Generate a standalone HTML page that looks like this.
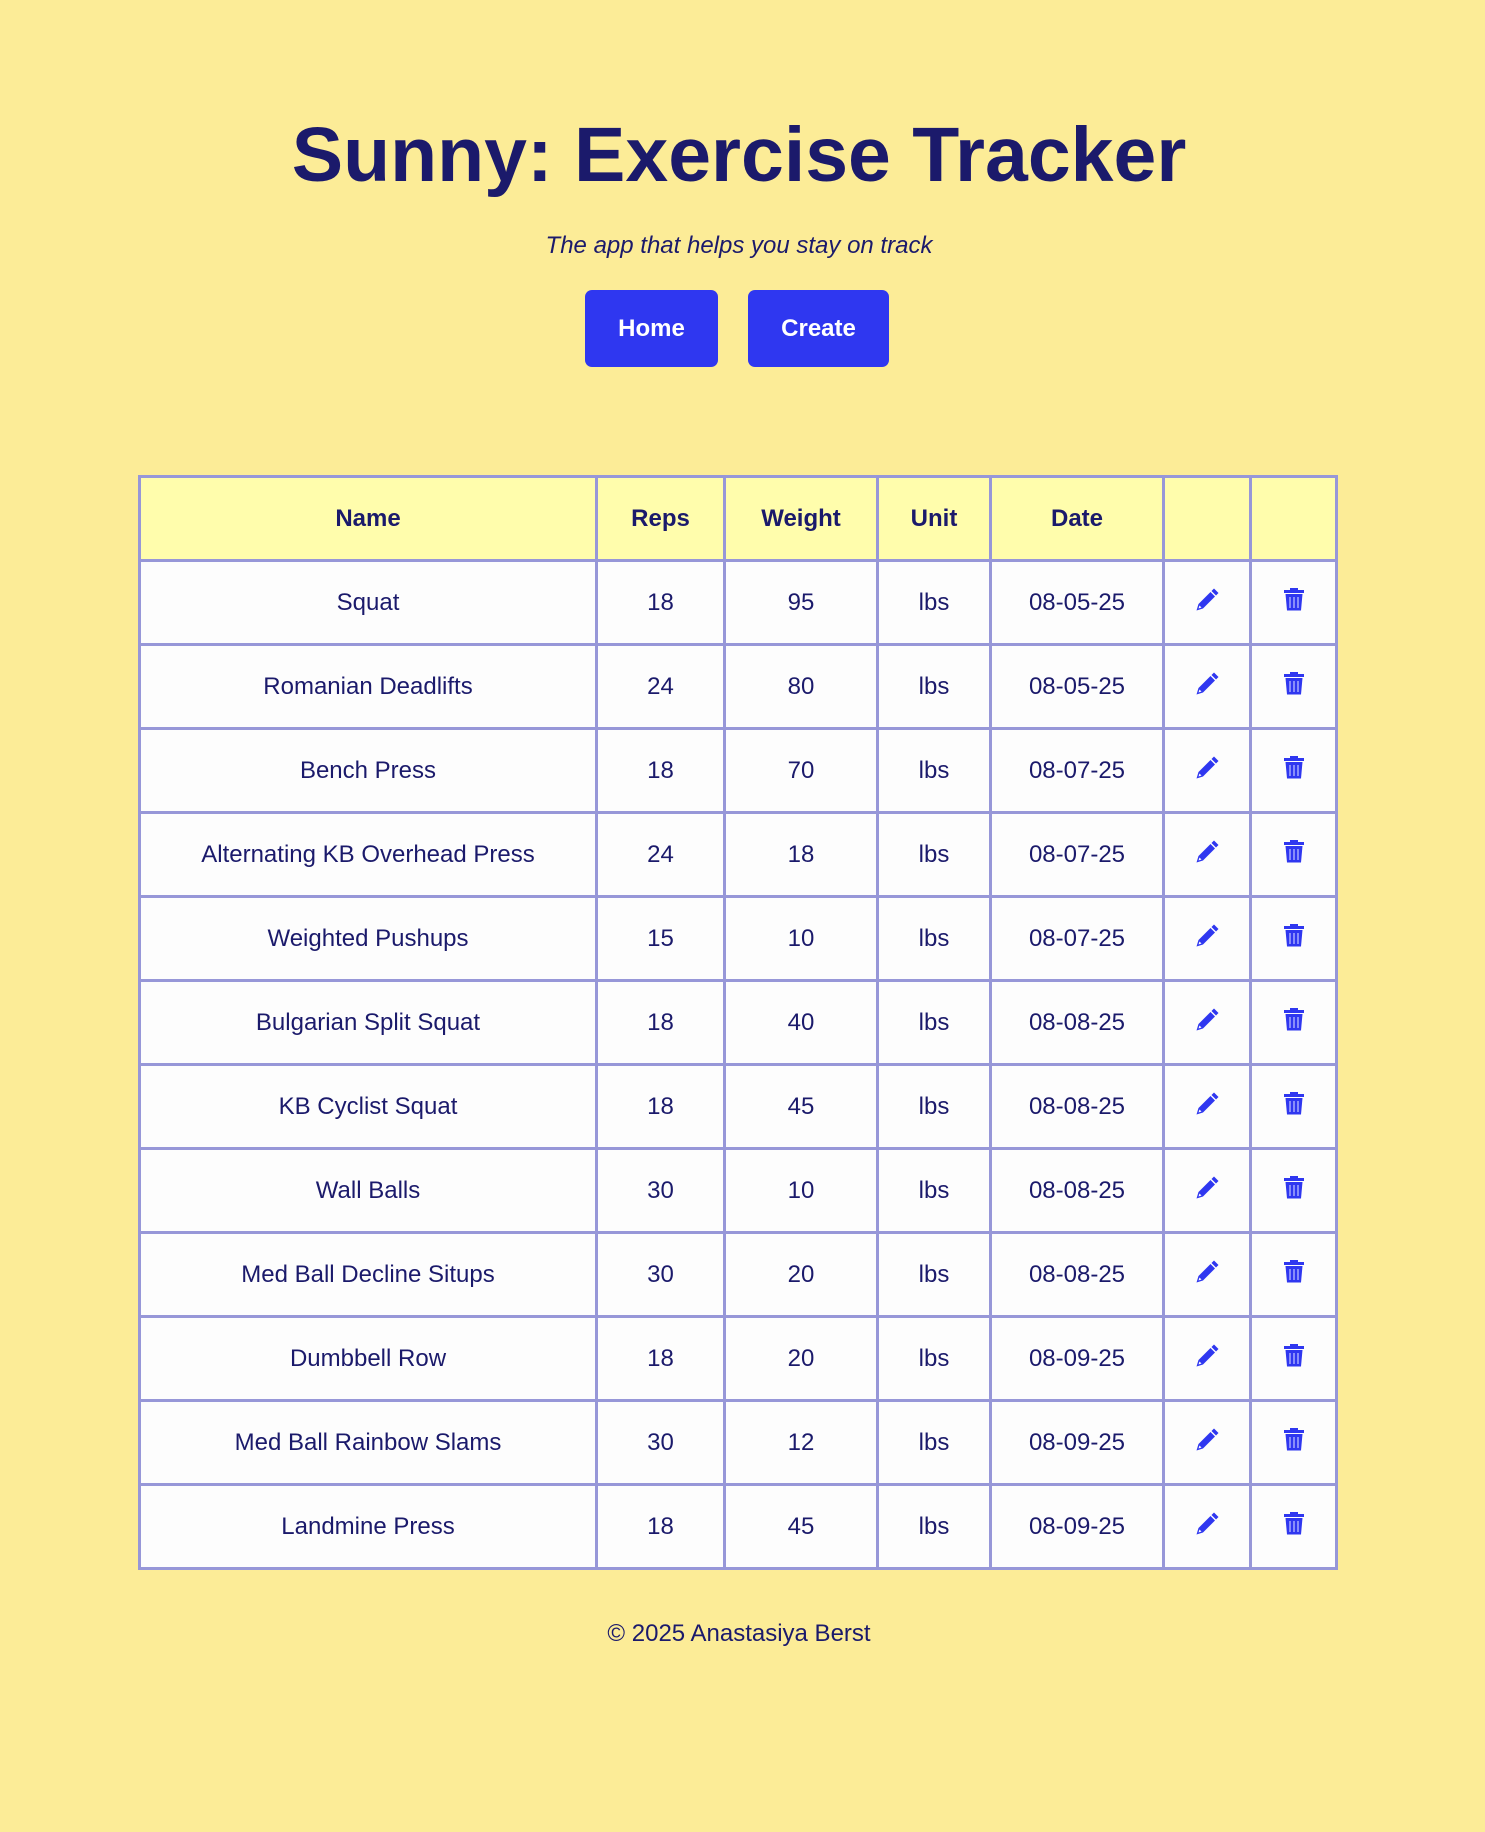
<!DOCTYPE html>
<html><head><meta charset="utf-8"><style>
html,body{margin:0;padding:0}
body{background:#fcec97;width:1485px;height:1832px;font-family:"Liberation Sans",sans-serif;color:#1b1a6b;position:relative}
h1{position:absolute;top:103px;left:0;width:1478px;text-align:center;margin:0;font-size:77px;font-weight:bold;line-height:104px}
.sub{position:absolute;top:232px;left:0;width:1478px;text-align:center;font-style:italic;font-size:24px;margin:0}
.btn{position:absolute;top:290px;height:77px;background:#2f37f0;color:#fff;border-radius:7px;font-weight:bold;font-size:24px;line-height:77px;text-align:center}
table{position:absolute;left:138px;top:475px;border-collapse:collapse}
td,th{border:3px solid #9797d8;text-align:center;font-size:24px;height:81px;padding:0}
th{background:#fffdac;font-weight:bold}
td{background:#fdfdfd}
svg{display:block;margin:-6px auto 0}
.foot{position:absolute;top:1620px;left:0;width:1478px;text-align:center;font-size:24px}
</style></head><body>
<h1>Sunny: Exercise Tracker</h1>
<p class="sub">The app that helps you stay on track</p>
<div class="btn" style="left:585px;width:133px">Home</div>
<div class="btn" style="left:748px;width:141px">Create</div>
<table>
<colgroup><col style="width:457px"><col style="width:128px"><col style="width:153px"><col style="width:113px"><col style="width:173px"><col style="width:87px"><col style="width:86px"></colgroup>
<tr><th>Name</th><th>Reps</th><th>Weight</th><th>Unit</th><th>Date</th><th></th><th></th></tr>
<tbody id="b"></tbody>
</table>
<div class="foot">© 2025 Anastasiya Berst</div>
<script>
var d=[["Squat",18,95,"08-05-25"],["Romanian Deadlifts",24,80,"08-05-25"],["Bench Press",18,70,"08-07-25"],["Alternating KB Overhead Press",24,18,"08-07-25"],["Weighted Pushups",15,10,"08-07-25"],["Bulgarian Split Squat",18,40,"08-08-25"],["KB Cyclist Squat",18,45,"08-08-25"],["Wall Balls",30,10,"08-08-25"],["Med Ball Decline Situps",30,20,"08-08-25"],["Dumbbell Row",18,20,"08-09-25"],["Med Ball Rainbow Slams",30,12,"08-09-25"],["Landmine Press",18,45,"08-09-25"]];
var pen='<svg width="25" height="25" viewBox="0 0 25 25"><path d="M19 1.5l4.5 4.5-2.5 2.5-4.5-4.5z" fill="#2f37f0"/><path d="M15.5 5l4.5 4.5L8 21.5 1.5 23.5 3.5 17z" fill="#2f37f0"/><path d="M4.5 18.5l-1 3 3-1z" fill="#fff"/></svg>';
var tr='<svg width="22" height="25" viewBox="0 0 22 25"><path d="M7 1h8v2h6v3H1V3h6z" fill="#2f37f0"/><path d="M2.5 7h17l-1.5 16.5H4z" fill="#2f37f0"/><path d="M7 10v11M11 10v11M15 10v11" stroke="#b8bcff" stroke-width="1.3"/></svg>';
var h="";d.forEach(function(r){h+="<tr><td>"+r[0]+"</td><td>"+r[1]+"</td><td>"+r[2]+"</td><td>lbs</td><td>"+r[3]+"</td><td>"+pen+"</td><td>"+tr+"</td></tr>"});
document.getElementById("b").innerHTML=h;
</script>
</body></html>
